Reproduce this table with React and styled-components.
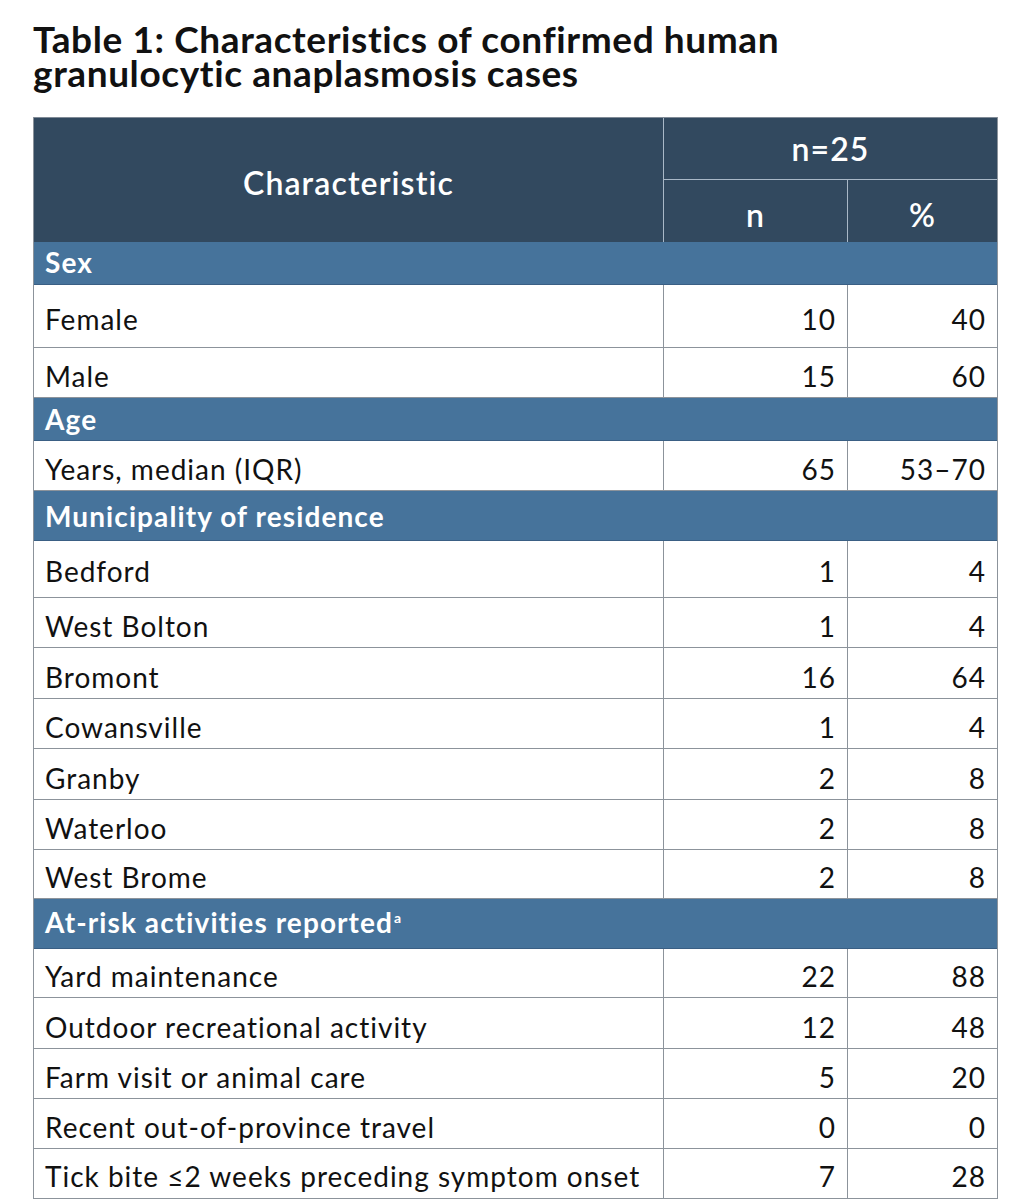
import React from "react";
import styled, { createGlobalStyle } from "styled-components";

const Global = createGlobalStyle`
  html, body { margin: 0; padding: 0; background: #fff; }
  body { font-family: Lato, "Open Sans", sans-serif; color: #111; }
`;

const Page = styled.div`
  padding: 22px 0 0 33px;
`;

const Title = styled.h1`
  margin: 0 0 27px 0;
  font-family: Lato, sans-serif;
  font-weight: 700;
  font-size: 37px;
  line-height: 34px;
  letter-spacing: 0.6px;
  color: #111;
  width: 840px;
`;

const TitleLine = styled.span`
  display: block;
`;

const Table = styled.div`
  width: 965px;
  box-sizing: border-box;
  border-left: 1px solid #8c939b;
  border-right: 1px solid #8c939b;
`;

const Head = styled.div`
  display: grid;
  grid-template-columns: 629px 184px 150px;
  grid-template-rows: 62px 62px;
  background: #32495f;
  border-top: 1px solid #7f8a96;
  color: #fff;
  font-weight: 600;
  letter-spacing: 1.1px;
`;

const HeadCell = styled.div`
  display: flex;
  align-items: center;
  justify-content: center;
  font-size: 32px;
  padding-top: ${(p) => p.$pt || 0}px;
  box-sizing: border-box;
  ${(p) => p.$span && `grid-column: ${p.$span};`}
  ${(p) => p.$rows && `grid-row: ${p.$rows};`}
  ${(p) => p.$left && `border-left: 1px solid #a9b8c7;`}
  ${(p) => p.$bottom && `border-bottom: 1px solid #a9b8c7;`}
`;

const Row = styled.div`
  display: grid;
  grid-template-columns: ${(p) => (p.$section ? "1fr" : "629px 184px 150px")};
  height: ${(p) => p.$h}px;
  box-sizing: border-box;
  background: ${(p) => (p.$section ? "#46739b" : "#fff")};
  border-bottom: 1px solid ${(p) => (p.$section ? "#3a5f84" : "#8c939b")};
`;

const Cell = styled.div`
  display: flex;
  align-items: flex-end;
  justify-content: ${(p) => (p.$num ? "flex-end" : "flex-start")};
  padding: 0 ${(p) => (p.$num ? 11 : 0)}px ${(p) => p.$pb}px ${(p) => (p.$num ? 0 : 11)}px;
  font-size: 28px;
  line-height: 28px;
  letter-spacing: 1px;
  color: #111;
  white-space: nowrap;
  ${(p) => p.$num && `border-left: 1px solid #8c939b;`}
`;

const SectionCell = styled.div`
  display: flex;
  align-items: flex-end;
  padding: 0 0 ${(p) => p.$pb}px 11px;
  font-size: 28px;
  line-height: 28px;
  letter-spacing: 1.1px;
  font-weight: 700;
  color: #fff;
  white-space: nowrap;
`;

const Label = styled.span``;

const Sup = styled.sup`
  font-size: 14px;
  line-height: 0;
  vertical-align: super;
  margin-left: 1px;
`;

const rows = [
  { s: "Sex", h: 43, pb: 8 },
  { l: "Female", n: "10", p: "40", h: 63, pb: 14 },
  { l: "Male", n: "15", p: "60", h: 50, pb: 7 },
  { s: "Age", h: 43, pb: 7 },
  { l: "Years, median (IQR)", n: "65", p: "53–70", h: 50, pb: 7 },
  { s: "Municipality of residence", h: 50, pb: 10 },
  { l: "Bedford", n: "1", p: "4", h: 57, pb: 12 },
  { l: "West Bolton", n: "1", p: "4", h: 50, pb: 7 },
  { l: "Bromont", n: "16", p: "64", h: 51, pb: 7 },
  { l: "Cowansville", n: "1", p: "4", h: 50, pb: 7 },
  { l: "Granby", n: "2", p: "8", h: 51, pb: 7 },
  { l: "Waterloo", n: "2", p: "8", h: 50, pb: 7 },
  { l: "West Brome", n: "2", p: "8", h: 49, pb: 7 },
  { s: "At-risk activities reported", sup: "a", h: 50, pb: 12 },
  { l: "Yard maintenance", n: "22", p: "88", h: 49, pb: 7 },
  { l: "Outdoor recreational activity", n: "12", p: "48", h: 51, pb: 7 },
  { l: "Farm visit or animal care", n: "5", p: "20", h: 50, pb: 7 },
  { l: "Recent out-of-province travel", n: "0", p: "0", h: 50, pb: 7 },
  { l: "Tick bite ≤2 weeks preceding symptom onset", n: "7", p: "28", h: 50, pb: 8 },
];

export default function App() {
  return (
    <Page>
      <Global />
      <Title>
        <TitleLine>Table 1: Characteristics of confirmed human</TitleLine>
        <TitleLine>granulocytic anaplasmosis cases</TitleLine>
      </Title>
      <Table>
        <Head>
          <HeadCell $rows="1 / 3" $pt={4}>Characteristic</HeadCell>
          <HeadCell $span="2 / 4" $left $bottom>n=25</HeadCell>
          <HeadCell $left $pt={6}>n</HeadCell>
          <HeadCell $left $pt={6}>%</HeadCell>
        </Head>
        {rows.map((r, i) =>
          r.s ? (
            <Row key={i} $section $h={r.h}>
              <SectionCell $pb={r.pb}>
                <Label>
                  {r.s}
                  {r.sup && <Sup>{r.sup}</Sup>}
                </Label>
              </SectionCell>
            </Row>
          ) : (
            <Row key={i} $h={r.h}>
              <Cell $pb={r.pb}>{r.l}</Cell>
              <Cell $num $pb={r.pb}>{r.n}</Cell>
              <Cell $num $pb={r.pb}>{r.p}</Cell>
            </Row>
          )
        )}
      </Table>
    </Page>
  );
}
